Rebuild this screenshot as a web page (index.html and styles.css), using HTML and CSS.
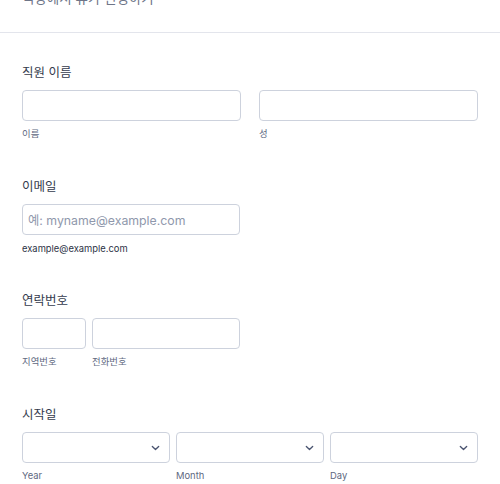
FILE: index.html
```html
<!DOCTYPE html>
<html lang="ko">
<head>
<meta charset="utf-8">
<link rel="stylesheet" href="styles.css">
</head>
<body>
<div class="header">
  <div class="title">직장에서 휴가 신청하기</div>
</div>
<div class="form">
  <div class="field">
    <div class="label">직원 이름</div>
    <div class="row">
      <div class="col half">
        <div class="box"></div>
        <div class="sub">이름</div>
      </div>
      <div class="col half">
        <div class="box"></div>
        <div class="sub">성</div>
      </div>
    </div>
  </div>
  <div class="field">
    <div class="label">이메일</div>
    <div class="row">
      <div class="col email">
        <div class="box"><span class="ph">예: myname@example.com</span></div>
        <div class="sub dark">example@example.com</div>
      </div>
    </div>
  </div>
  <div class="field">
    <div class="label">연락번호</div>
    <div class="row tight">
      <div class="col area">
        <div class="box"></div>
        <div class="sub">지역번호</div>
      </div>
      <div class="col phone">
        <div class="box"></div>
        <div class="sub">전화번호</div>
      </div>
    </div>
  </div>
  <div class="field">
    <div class="label">시작일</div>
    <div class="row tight">
      <div class="col third">
        <div class="box select"><svg class="chev" viewBox="0 0 10 6" width="9" height="6"><path d="M1.5 1.3 L5 4.6 L8.5 1.3" fill="none" stroke="#4a5470" stroke-width="1.5" stroke-linecap="round" stroke-linejoin="round"/></svg></div>
        <div class="sub">Year</div>
      </div>
      <div class="col third">
        <div class="box select"><svg class="chev" viewBox="0 0 10 6" width="9" height="6"><path d="M1.5 1.3 L5 4.6 L8.5 1.3" fill="none" stroke="#4a5470" stroke-width="1.5" stroke-linecap="round" stroke-linejoin="round"/></svg></div>
        <div class="sub">Month</div>
      </div>
      <div class="col third">
        <div class="box select"><svg class="chev" viewBox="0 0 10 6" width="9" height="6"><path d="M1.5 1.3 L5 4.6 L8.5 1.3" fill="none" stroke="#4a5470" stroke-width="1.5" stroke-linecap="round" stroke-linejoin="round"/></svg></div>
        <div class="sub">Day</div>
      </div>
    </div>
  </div>
</div>
</body>
</html>
```
FILE: styles.css
```css
html, body {
  margin: 0;
  padding: 0;
  background: #ffffff;
}
body {
  font-family: Inter, "Noto Sans CJK KR", sans-serif;
  color: #2c3345;
  width: 500px;
  height: 484px;
  overflow: hidden;
}
.header {
  height: 32px;
  border-bottom: 1px solid #e3e5ec;
  padding: 0 22px;
  overflow: hidden;
}
.title {
  font-size: 13.5px;
  line-height: 18px;
  color: #6e7588;
  margin-top: -11px;
}
.form {
  padding: 30px 22px 0 22px;
}
.field {
  height: 114px;
}
.label {
  font-size: 12.5px;
  line-height: 20px;
  color: #343b4d;
  margin-bottom: 7px;
}
.row {
  display: flex;
  gap: 18px;
}
.row.tight {
  gap: 6px;
}
.col {
  display: flex;
  flex-direction: column;
}
.half { width: 219px; }
.email { width: 218px; }
.area { width: 64px; }
.phone { width: 148px; }
.third { width: 148px; }
.box {
  height: 31px;
  box-sizing: border-box;
  border: 1px solid #cdd2dd;
  border-radius: 4px;
  background: #fff;
  display: flex;
  align-items: center;
  padding: 0 5px;
}
.select {
  justify-content: flex-end;
  padding-right: 9px;
}
.chev {
  display: block;
}
.ph {
  font-size: 12.3px;
  color: #8f98ac;
}
.sub {
  font-size: 9.4px;
  line-height: 13px;
  color: #5e687f;
  margin-top: 6px;
}
.sub.dark {
  color: #2c3345;
  margin-top: 7px;
}
```
